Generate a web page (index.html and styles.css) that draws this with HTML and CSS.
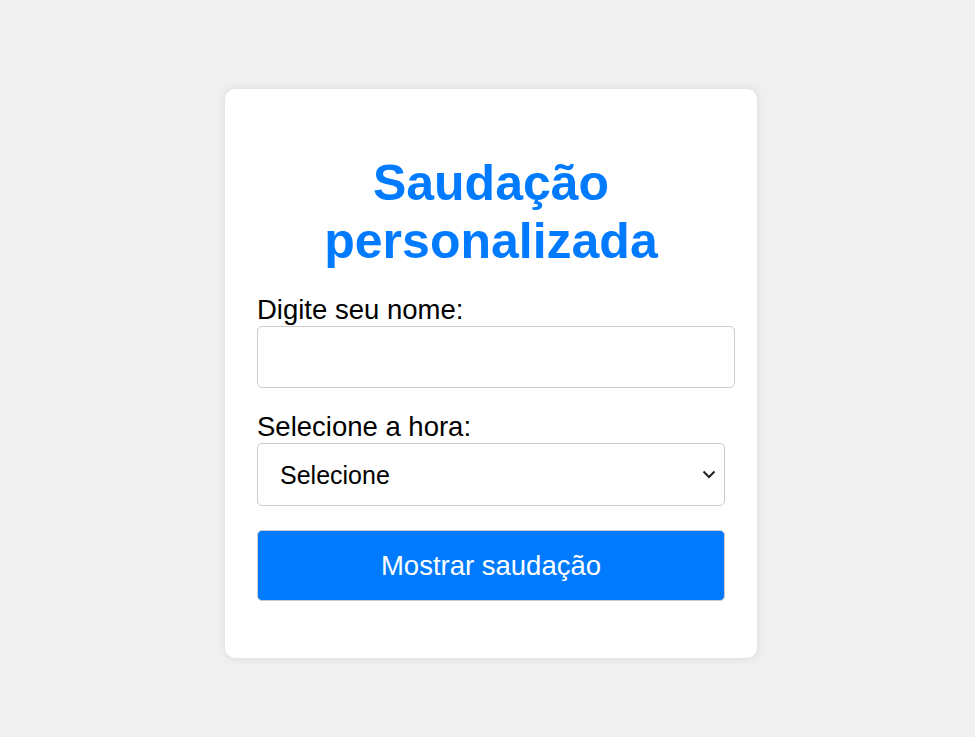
FILE: index.html
```html
<!DOCTYPE html>
<html lang="pt">
<head>
<meta charset="utf-8">
<title>Saudação personalizada</title>
<link rel="stylesheet" href="styles.css">
</head>
<body>
  <div class="card">
    <h1 class="title">Saudação personalizada</h1>
    <label class="label" for="nome">Digite seu nome:</label>
    <input class="field" type="text" id="nome">
    <label class="label label-second" for="hora">Selecione a hora:</label>
    <select class="select" id="hora">
      <option>Selecione</option>
      <option>Manhã</option>
      <option>Tarde</option>
      <option>Noite</option>
    </select>
    <button class="button" type="button">Mostrar saudação</button>
    <div class="result"></div>
  </div>
</body>
</html>
```
FILE: styles.css
```css
html, body {
  margin: 0;
  padding: 0;
}
body {
  background: #f0f0f0;
  font-family: "Liberation Sans", Arial, sans-serif;
  display: flex;
  justify-content: center;
  align-items: flex-start;
  min-height: 737px;
  box-sizing: border-box;
  padding: 89px 0 0 7px;
}
.card {
  width: 532px;
  box-sizing: border-box;
  background: #fff;
  border-radius: 10px;
  padding: 32px;
  box-shadow: 0 0 10px rgba(0, 0, 0, 0.1);
}
.title {
  color: #007bff;
  font-size: 50px;
  font-weight: bold;
  text-align: center;
  margin: 33px 0 24px;
  line-height: 58px;
}
.label {
  display: block;
  font-size: 27.5px;
  color: #000;
  line-height: 31px;
}
.label-second {
  margin-top: 23px;
}
.field {
  display: block;
  width: 468px;
  box-sizing: content-box;
  height: 60px;
  padding: 0 4px;
  border: 1px solid #ccc;
  border-radius: 5px;
  font-size: 25px;
  font-family: inherit;
  margin: 1px 0 0;
}
.select {
  display: block;
  width: 468px;
  height: 63px;
  box-sizing: border-box;
  padding: 0 40px 0 22px;
  margin-top: 1px;
  border: 1px solid #ccc;
  border-radius: 5px;
  font-size: 25px;
  font-family: inherit;
  color: #000;
  -webkit-appearance: none;
  appearance: none;
  background-color: #fff;
  background-image: url("data:image/svg+xml;utf8,<svg xmlns='http://www.w3.org/2000/svg' width='14' height='9' viewBox='0 0 14 9'><path d='M1.5 1.5 L7 7 L12.5 1.5' fill='none' stroke='%23222' stroke-width='2'/></svg>");
  background-repeat: no-repeat;
  background-position: right 8px center;
  background-size: 14px 9px;
}
.button {
  display: block;
  width: 468px;
  height: 71px;
  box-sizing: border-box;
  margin-top: 24px;
  border: 1px solid #ccc;
  border-radius: 5px;
  background: #007bff;
  color: #fff;
  font-size: 27.5px;
  font-family: inherit;
}
.result {
  height: 25px;
}
```
